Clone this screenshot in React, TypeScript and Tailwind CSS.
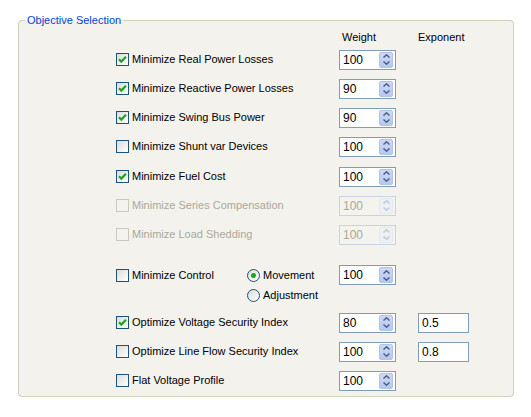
import type { ReactNode } from 'react';

const FONT = { fontFamily: '"Liberation Sans", Arial, sans-serif' };

const CheckMark = () => (
  <svg width="9" height="9" viewBox="0 0 9 9" className="block">
    <path d="M1 4.2 L3.3 6.6 L8 1.8" fill="none" stroke="#21a121" strokeWidth="2.2" />
  </svg>
);

const Checkbox = ({ checked, disabled }: { checked?: boolean; disabled?: boolean }) => (
  <span
    className={`flex h-[13px] w-[13px] shrink-0 items-center justify-center border ${
      disabled
        ? 'border-[#cac8bb] bg-[#f4f3ee]'
        : 'border-[#1c5180] bg-gradient-to-br from-[#dcdcd7] to-white'
    }`}
  >
    {checked && !disabled && <CheckMark />}
  </span>
);

const Radio = ({ selected }: { selected?: boolean }) => (
  <span className="flex h-[13px] w-[13px] shrink-0 items-center justify-center rounded-full border border-[#1c5180] bg-gradient-to-br from-[#dcdcd7] to-white">
    {selected && <span className="h-[5px] w-[5px] rounded-full bg-[#21a121]" />}
  </span>
);

const Chevron = ({ up, disabled }: { up?: boolean; disabled?: boolean }) => (
  <svg width="7" height="4" viewBox="0 0 7 4" className="block">
    <path
      d={up ? 'M0.5 3.5 L3.5 0.8 L6.5 3.5' : 'M0.5 0.5 L3.5 3.2 L6.5 0.5'}
      fill="none"
      stroke={disabled ? '#c3c9d6' : '#4d6185'}
      strokeWidth="1.5"
    />
  </svg>
);

const Spinner = ({ value, disabled }: { value: string; disabled?: boolean }) => (
  <div
    className={`flex h-[20px] w-[57px] items-center border pl-[3px] ${
      disabled ? 'border-[#c9d3e2] bg-[#f4f3ee] text-[#aca899]' : 'border-[#7f9db9] bg-white text-black'
    }`}
  >
    <span className="flex-1 text-[12px] leading-none">{value}</span>
    <span
      className={`mr-[2px] flex h-[16px] w-[14px] flex-col items-center justify-center gap-[3px] rounded-[2px] ${
        disabled
          ? 'border border-[#e3e8f1] bg-[#eef0f4]'
          : 'border border-[#b3c3e6] bg-gradient-to-b from-[#cdd9f9] to-[#b6c7ef]'
      }`}
    >
      <Chevron up disabled={disabled} />
      <Chevron disabled={disabled} />
    </span>
  </div>
);

const TextBox = ({ value }: { value: string }) => (
  <div className="flex h-[20px] w-[51px] items-center border border-[#7f9db9] bg-white pl-[3px] text-[12px] leading-none">
    {value}
  </div>
);

type RowProps = {
  label: string;
  checked?: boolean;
  disabled?: boolean;
  weight: string;
  exponent?: string;
};

const Row = ({ label, checked, disabled, weight, exponent }: RowProps) => (
  <div className="flex h-[29px] items-center">
    <label className={`flex w-[223px] items-center gap-[3px] ${disabled ? 'text-[#aca899]' : 'text-black'}`}>
      <Checkbox checked={checked} disabled={disabled} />
      <span className="whitespace-nowrap">{label}</span>
    </label>
    <Spinner value={weight} disabled={disabled} />
    {exponent && (
      <div className="ml-[22px]">
        <TextBox value={exponent} />
      </div>
    )}
  </div>
);

const RadioOption = ({ selected, children }: { selected?: boolean; children: ReactNode }) => (
  <label className="flex h-[20px] items-center gap-[3px] whitespace-nowrap">
    <Radio selected={selected} />
    {children}
  </label>
);

const App = () => {
  return (
    <div className="h-[417px] w-[531px] bg-white pt-[13px] text-[11px] text-black" style={FONT}>
      <fieldset className="ml-[18px] h-[384px] w-[496px] rounded-[4px] border border-[#d0d0bf] bg-[#f3f2ed] px-[6px]">
        <legend className="px-[2px] text-[11px] leading-[14px] text-[#0046d5]">Objective Selection</legend>
        <div className="ml-[91px]">
          <div className="mt-[2px] flex h-[16px] items-center">
            <div className="w-[223px]" />
            <div className="w-[57px] pl-[3px]">Weight</div>
            <div className="ml-[22px]">Exponent</div>
          </div>
          <Row label="Minimize Real Power Losses" checked weight="100" />
          <Row label="Minimize Reactive Power Losses" checked weight="90" />
          <Row label="Minimize Swing Bus Power" checked weight="90" />
          <Row label="Minimize Shunt var Devices" weight="100" />
          <div className="mt-[1px]" />
          <Row label="Minimize Fuel Cost" checked weight="100" />
          <Row label="Minimize Series Compensation" disabled weight="100" />
          <Row label="Minimize Load Shedding" disabled weight="100" />

          <div className="mt-[16px] flex h-[40px] items-start">
            <label className="flex h-[20px] w-[131px] items-center gap-[3px]">
              <Checkbox />
              <span className="whitespace-nowrap">Minimize Control</span>
            </label>
            <div className="flex w-[92px] flex-col">
              <RadioOption selected>Movement</RadioOption>
              <RadioOption>Adjustment</RadioOption>
            </div>
            <Spinner value="100" />
          </div>

          <div className="mt-[3px]">
            <Row label="Optimize Voltage Security Index" checked weight="80" exponent="0.5" />
            <Row label="Optimize Line Flow Security Index" weight="100" exponent="0.8" />
            <Row label="Flat Voltage Profile" weight="100" />
          </div>
        </div>
      </fieldset>
    </div>
  );
};

export default App;
